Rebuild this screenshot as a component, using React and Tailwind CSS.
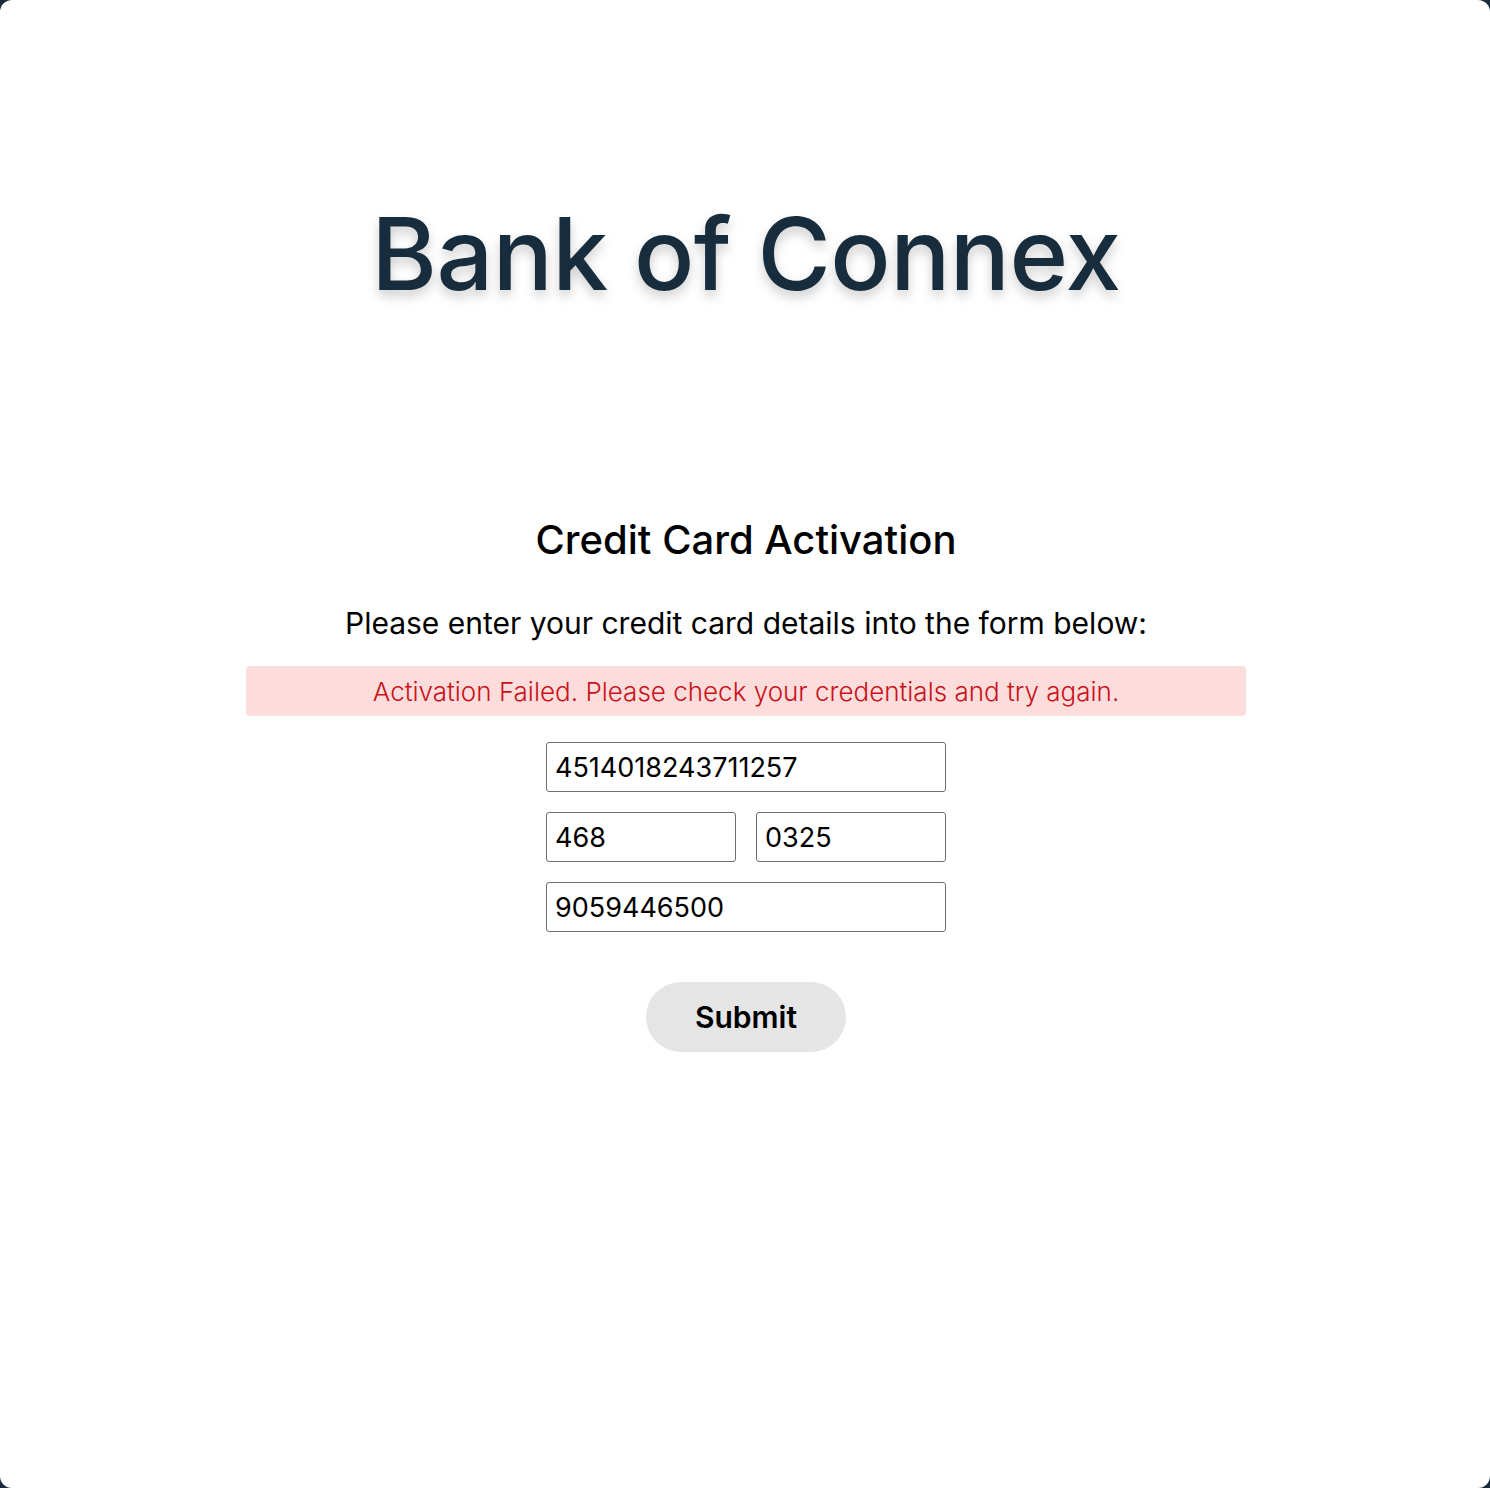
export default function App() {
  return (
    <div className="min-h-[1488px] bg-[#1a2c3b]" style={{ fontFamily: 'Inter, "Noto Sans", sans-serif' }}>
      <div className="flex min-h-[1488px] flex-col items-center rounded-[12px] bg-white pl-[2px]">
        <h1 className="mt-[204px] text-[100px] font-medium leading-none tracking-[-0.5px] text-[#172c3c] [text-shadow:0_6px_12px_rgba(0,0,0,0.2)]">
          Bank of Connex
        </h1>

        <div className="mt-[216px] flex w-[1000px] flex-col items-center">
          <h2 className="text-[40px] font-medium leading-none text-black">Credit Card Activation</h2>
          <p className="mt-[48px] text-[30px] leading-none text-black">
            Please enter your credit card details into the form below:
          </p>
          <div className="mt-[28px] flex h-[50px] w-full items-center justify-center rounded-[4px] bg-[#fddcdc] text-[26px] font-light text-[#c9121a]">
            Activation Failed. Please check your credentials and try again.
          </div>

          <form className="mt-[26px] flex w-[400px] flex-col gap-[20px]">
            <input
              defaultValue="4514018243711257"
              className="h-[50px] w-full rounded-[3px] border border-[#6f6f6f] px-[8px] text-[27px] text-black outline-none"
            />
            <div className="flex gap-[20px]">
              <input
                defaultValue="468"
                className="h-[50px] w-[190px] rounded-[3px] border border-[#6f6f6f] px-[8px] text-[27px] text-black outline-none"
              />
              <input
                defaultValue="0325"
                className="h-[50px] w-[190px] rounded-[3px] border border-[#6f6f6f] px-[8px] text-[27px] text-black outline-none"
              />
            </div>
            <input
              defaultValue="9059446500"
              className="h-[50px] w-full rounded-[3px] border border-[#6f6f6f] px-[8px] text-[27px] text-black outline-none"
            />
            <button
              type="button"
              className="mx-auto mt-[30px] h-[70px] w-[200px] rounded-full bg-[#e5e5e5] text-[30px] font-semibold text-black"
            >
              Submit
            </button>
          </form>
        </div>
      </div>
    </div>
  );
}
